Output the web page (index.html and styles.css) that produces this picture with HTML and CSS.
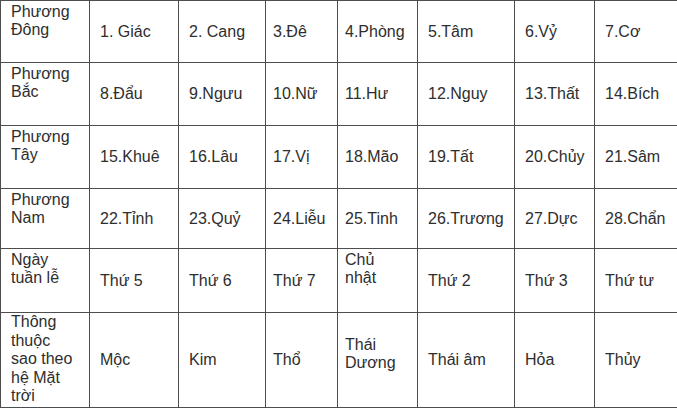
FILE: index.html
```html
<!DOCTYPE html>
<html lang="vi">
<head>
<meta charset="utf-8">
<title>Nhị thập bát tú</title>
<link rel="stylesheet" href="styles.css">
</head>
<body>
<table class="grid">
  <colgroup>
    <col class="c1"><col class="c2"><col class="c3"><col class="c4">
    <col class="c5"><col class="c6"><col class="c7"><col class="c8">
  </colgroup>
  <tr class="r1">
    <td class="head">Phương Đông</td>
    <td>1. Giác</td><td>2. Cang</td><td>3.Đê</td><td>4.Phòng</td><td>5.Tâm</td><td>6.Vỷ</td><td>7.Cơ</td>
  </tr>
  <tr class="r2">
    <td class="head">Phương Bắc</td>
    <td>8.Đẩu</td><td>9.Ngưu</td><td>10.Nữ</td><td>11.Hư</td><td>12.Nguy</td><td>13.Thất</td><td>14.Bích</td>
  </tr>
  <tr class="r3">
    <td class="head">Phương Tây</td>
    <td>15.Khuê</td><td>16.Lâu</td><td>17.Vị</td><td>18.Mão</td><td>19.Tất</td><td>20.Chủy</td><td>21.Sâm</td>
  </tr>
  <tr class="r4">
    <td class="head">Phương Nam</td>
    <td>22.Tỉnh</td><td>23.Quỷ</td><td>24.Liễu</td><td>25.Tinh</td><td>26.Trương</td><td>27.Dực</td><td>28.Chẩn</td>
  </tr>
  <tr class="r5">
    <td class="head">Ngày tuần lễ</td>
    <td>Thứ 5</td><td>Thứ 6</td><td>Thứ 7</td><td class="head">Chủ nhật</td><td>Thứ 2</td><td>Thứ 3</td><td>Thứ tư</td>
  </tr>
  <tr class="r6">
    <td class="head tall">Thông thuộc sao theo hệ Mặt trời</td>
    <td>Mộc</td><td>Kim</td><td>Thổ</td><td class="head sun">Thái Dương</td><td>Thái âm</td><td>Hỏa</td><td>Thủy</td>
  </tr>
</table>
</body>
</html>
```

FILE: styles.css
```css
html, body {
  margin: 0;
  padding: 0;
  background: #ffffff;
}

.grid {
  border-collapse: collapse;
  table-layout: fixed;
  width: 677px;
  font-family: "Liberation Sans", Arial, sans-serif;
  font-size: 16px;
  line-height: 18px;
  color: #2e2e2e;
}

.c1 { width: 89px; }
.c2 { width: 89px; }
.c3 { width: 87px; }
.c4 { width: 72px; }
.c5 { width: 80px; }
.c6 { width: 97px; }
.c7 { width: 80px; }
.c8 { width: 83px; }

.grid td {
  border: 1px solid #4d4d4d;
  padding: 0 4px 0 10px;
  vertical-align: middle;
}

.grid td:first-child {
  padding-right: 14px;
}

.grid td:nth-child(4),
.grid td:nth-child(5) {
  padding-left: 7px;
}

.grid td:nth-child(5) {
  padding-right: 10px;
}

.r1 { height: 62px; }
.r2 { height: 63px; }
.r3 { height: 63px; }
.r4 { height: 60px; }
.r5 { height: 64px; }
.r6 { height: 95px; }

.grid td.head {
  vertical-align: top;
  padding-top: 2px;
}

.grid td.tall {
  padding-top: 0;
  line-height: 18.6px;
}

.grid td.sun {
  padding-top: 23px;
}
```
